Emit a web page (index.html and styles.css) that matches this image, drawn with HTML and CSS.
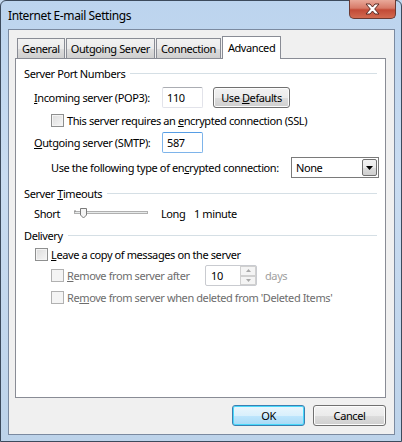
FILE: index.html
```html
<!DOCTYPE html>
<html lang="en">
<head>
  <meta charset="UTF-8">
  <title>Internet E-mail Settings</title>
  <link rel="stylesheet" href="styles.css">
</head>
<body>
  <div class="window">
    <!-- Title bar -->
    <div class="titlebar">
      <span class="title">Internet E-mail Settings</span>
      <div class="close">
        <svg width="15" height="12" viewBox="0 0 15 12">
          <path d="M1 1 H5 L7.5 4 L10 1 H14 L9.7 6 L14 11 H10 L7.5 8 L5 11 H1 L5.3 6 Z" fill="#fff" stroke="#5a2a24" stroke-width="1" stroke-linejoin="round"/>
        </svg>
      </div>
    </div>

    <div class="client">
      <!-- Tabs -->
      <div class="tabs">
        <div class="tab">General</div>
        <div class="tab">Outgoing Server</div>
        <div class="tab">Connection</div>
        <div class="tab active">Advanced</div>
      </div>

      <div class="panel">
        <!-- Server Port Numbers -->
        <div class="group"><span>Server Port Numbers</span></div>
        <div class="row port">
          <span class="label"><u>I</u>ncoming server (POP3):</span>
          <input class="textbox" type="text" value="110">
          <button class="btn defaults">Use <u>D</u>efaults</button>
        </div>
        <div class="row check sub">
          <span class="box"></span>
          <span>This server requires an <u>e</u>ncrypted connection (SSL)</span>
        </div>
        <div class="row port">
          <span class="label"><u>O</u>utgoing server (SMTP):</span>
          <input class="textbox focus" type="text" value="587">
        </div>
        <div class="row port enc">
          <span class="label wide">Use the following type of en<u>c</u>rypted connection:</span>
          <div class="select">
            <span>None</span>
            <span class="drop">
              <svg width="7" height="4" viewBox="0 0 7 4"><path d="M0 0 H7 L3.5 4 Z" fill="#000"/></svg>
            </span>
          </div>
        </div>

        <!-- Server Timeouts -->
        <div class="group timeouts"><span>Server <u>T</u>imeouts</span></div>
        <div class="row slider-row">
          <span class="short">Short</span>
          <svg class="slider" width="74" height="12" viewBox="0 0 74 12">
            <rect x="0.5" y="4.5" width="73" height="2" fill="#e7eaea" stroke="#b0b0b0" stroke-width="1"/>
            <path d="M1 3 V5" stroke="#888" stroke-width="1"/>
            <path d="M6.5 1.5 H12.5 V8 L9.5 11 L6.5 8 Z" fill="#f4f4f4" stroke="#7b7b7b" stroke-width="1"/>
          </svg>
          <span class="long">Long</span>
          <span>1 minute</span>
        </div>

        <!-- Delivery -->
        <div class="group delivery"><span>Delivery</span></div>
        <div class="row check leave">
          <span class="box"></span>
          <span><u>L</u>eave a copy of messages on the server</span>
        </div>
        <div class="row check sub disabled after">
          <span class="box"></span>
          <span class="after-label"><u>R</u>emove from server after</span>
          <div class="spin">
            <span>10</span>
            <span class="arrows">
              <span class="arrow"><svg width="5" height="3" viewBox="0 0 5 3"><path d="M0 3 H5 L2.5 0 Z" fill="#a8a8a8"/></svg></span>
              <span class="arrow"><svg width="5" height="3" viewBox="0 0 5 3"><path d="M0 0 H5 L2.5 3 Z" fill="#a8a8a8"/></svg></span>
            </span>
          </div>
          <span class="days">days</span>
        </div>
        <div class="row check sub disabled deleted">
          <span class="box"></span>
          <span>Re<u>m</u>ove from server when deleted from 'Deleted Items'</span>
        </div>
      </div>

      <!-- Dialog buttons -->
      <div class="actions">
        <button class="btn default">OK</button>
        <button class="btn">Cancel</button>
      </div>
    </div>
  </div>
</body>
</html>
```

FILE: styles.css
```css
html,
body {
  margin: 0;
  padding: 0;
}
body {
  font-family: "Noto Sans", "Open Sans", sans-serif;
  font-size: 11px;
  letter-spacing: -0.4px;
  color: #000;
  background: #c4d9ef;
  white-space: nowrap;
}
u {
  text-decoration: underline;
  text-underline-offset: 1px;
}

/* Window frame */
.window {
  width: 402px;
  height: 442px;
  box-sizing: border-box;
  padding: 0 6px 7px 7px;
  border: 1px solid #3c4a5c;
  border-radius: 6px 6px 0 0;
  background: linear-gradient(180deg, #bcd4ee 0%, #c9dcf1 40%, #bdd3ea 100%);
}
.titlebar {
  height: 28px;
  display: flex;
  align-items: flex-start;
  justify-content: space-between;
}
.title {
  margin-top: 6px;
  font-size: 12px;
  letter-spacing: -0.4px;
}
.close {
  width: 47px;
  height: 19px;
  margin-top: -1px;
  margin-right: -1px;
  box-sizing: border-box;
  border: 1px solid #6b3a32;
  border-top: 0;
  border-radius: 0 0 5px 5px;
  background: linear-gradient(180deg, #e9a99a 0%, #d77a68 45%, #c24a36 55%, #d26a50 100%);
  display: flex;
  align-items: center;
  justify-content: center;
}

/* Client area */
.client {
  height: 406px;
  box-sizing: border-box;
  border: 1px solid #7b8aa0;
  background: #f0f0f0;
  padding: 6px 8px 8px 6px;
  display: flex;
  flex-direction: column;
}

/* Tabs */
.tabs {
  display: flex;
  align-items: flex-end;
  height: 22px;
  padding-left: 2px;
  position: relative;
  z-index: 1;
}
.tab {
  height: 20px;
  box-sizing: border-box;
  padding: 0 4px;
  margin-right: 1px;
  border: 1px solid #898c95;
  border-bottom: 0;
  background: linear-gradient(180deg, #f2f2f2 0%, #ebebeb 50%, #dddddd 51%, #cfcfcf 100%);
  display: flex;
  align-items: center;
}
.tab.active {
  height: 23px;
  margin-bottom: -1px;
  padding: 0 5px 2px;
  background: #fff;
}

/* Panel */
.panel {
  height: 340px;
  box-sizing: border-box;
  border: 1px solid #898c95;
  background: #fff;
  padding: 6px 8px 0 8px;
  display: flex;
  flex-direction: column;
}
.group {
  height: 16px;
  display: flex;
  align-items: center;
}
.group::after {
  content: "";
  flex: 1;
  height: 1px;
  margin-left: 5px;
  background: #d5dfe5;
}
.row {
  display: flex;
  align-items: center;
  height: 21px;
  margin-left: 10px;
}
.row > * {
  flex-shrink: 0;
}
.row.port {
  margin-top: 4px;
}
.group + .row.port {
  margin-top: 6px;
}
.label {
  width: 128px;
}
.label.wide {
  width: 240px;
  margin-left: 17px;
}
.textbox {
  width: 41px;
  height: 21px;
  box-sizing: border-box;
  margin: 0;
  padding: 0 4px;
  font: inherit;
  letter-spacing: inherit;
  border: 1px solid #e2e3ea;
  border-top-color: #abadb3;
  border-radius: 2px;
  outline: none;
}
.textbox.focus {
  border-color: #7eb4ea;
  border-top-color: #569de5;
}

/* Buttons */
.btn {
  height: 21px;
  width: 73px;
  margin: 0;
  padding: 0;
  box-sizing: border-box;
  font: inherit;
  letter-spacing: inherit;
  color: #000;
  border: 1px solid #707070;
  border-radius: 3px;
  background: linear-gradient(180deg, #f2f2f2 0%, #ebebeb 50%, #dddddd 51%, #cfcfcf 100%);
  box-shadow: inset 0 0 0 1px #fcfcfc;
}
.btn.defaults {
  width: 77px;
  margin-left: 10px;
}
.btn.default {
  border-color: #3c7fb1;
  background: linear-gradient(180deg, #eaf6fd 0%, #d9f0fc 50%, #bee6fd 51%, #a7d9f5 100%);
  box-shadow: inset 0 0 0 1px #48d8fb;
}

/* Checkboxes */
.row.check {
  height: 16px;
  margin-top: 4px;
}
.row.sub {
  margin-left: 27px;
}
.box {
  width: 13px;
  height: 13px;
  box-sizing: border-box;
  margin-right: 3px;
  border: 1px solid #8e8f8f;
  background: linear-gradient(135deg, #dcdcdc 0%, #f6f6f6 100%);
  box-shadow: inset 0 0 0 1px #f4f4f4;
}
.row.disabled {
  color: #6d6d6d;
}
.row.disabled .box {
  border-color: #b1b1b1;
  background: #f4f4f4;
}

/* Select */
.select {
  width: 88px;
  height: 21px;
  box-sizing: border-box;
  border: 1px solid #7a7a7a;
  background: #fff;
  display: flex;
  align-items: center;
  justify-content: space-between;
  padding: 0 1px 0 4px;
}
.drop {
  width: 15px;
  height: 17px;
  box-sizing: border-box;
  border: 1px solid #707070;
  border-radius: 2px;
  background: linear-gradient(180deg, #f2f2f2 0%, #ebebeb 50%, #dddddd 51%, #cfcfcf 100%);
  display: flex;
  align-items: center;
  justify-content: center;
}

/* Slider */
.group.timeouts {
  margin-top: 7px;
}
.slider-row {
  height: 16px;
  margin-top: 4px;
}
.short {
  width: 40px;
}
.slider {
  margin-right: 13px;
}
.long {
  width: 33px;
}

/* Delivery */
.group.delivery {
  margin-top: 6px;
}
.row.leave {
  margin-left: 11px;
  margin-top: 3px;
}
.row.after {
  height: 21px;
  margin-top: 3px;
}
.after-label {
  width: 138px;
}
.spin {
  width: 52px;
  height: 21px;
  box-sizing: border-box;
  border: 1px solid #c9cbd0;
  border-radius: 2px;
  padding-left: 5px;
  display: flex;
  align-items: center;
  justify-content: space-between;
  color: #000;
}
.arrows {
  width: 16px;
  height: 19px;
  display: flex;
  flex-direction: column;
}
.arrow {
  flex: 1;
  border: 1px solid #d0d0d0;
  background: #f4f4f4;
  display: flex;
  align-items: center;
  justify-content: center;
}
.days {
  margin-left: 8px;
  color: #a0a0a0;
}
.row.deleted {
  margin-top: 3px;
}

/* Dialog buttons */
.actions {
  display: flex;
  justify-content: flex-end;
  gap: 8px;
  margin-top: 7px;
}
```
